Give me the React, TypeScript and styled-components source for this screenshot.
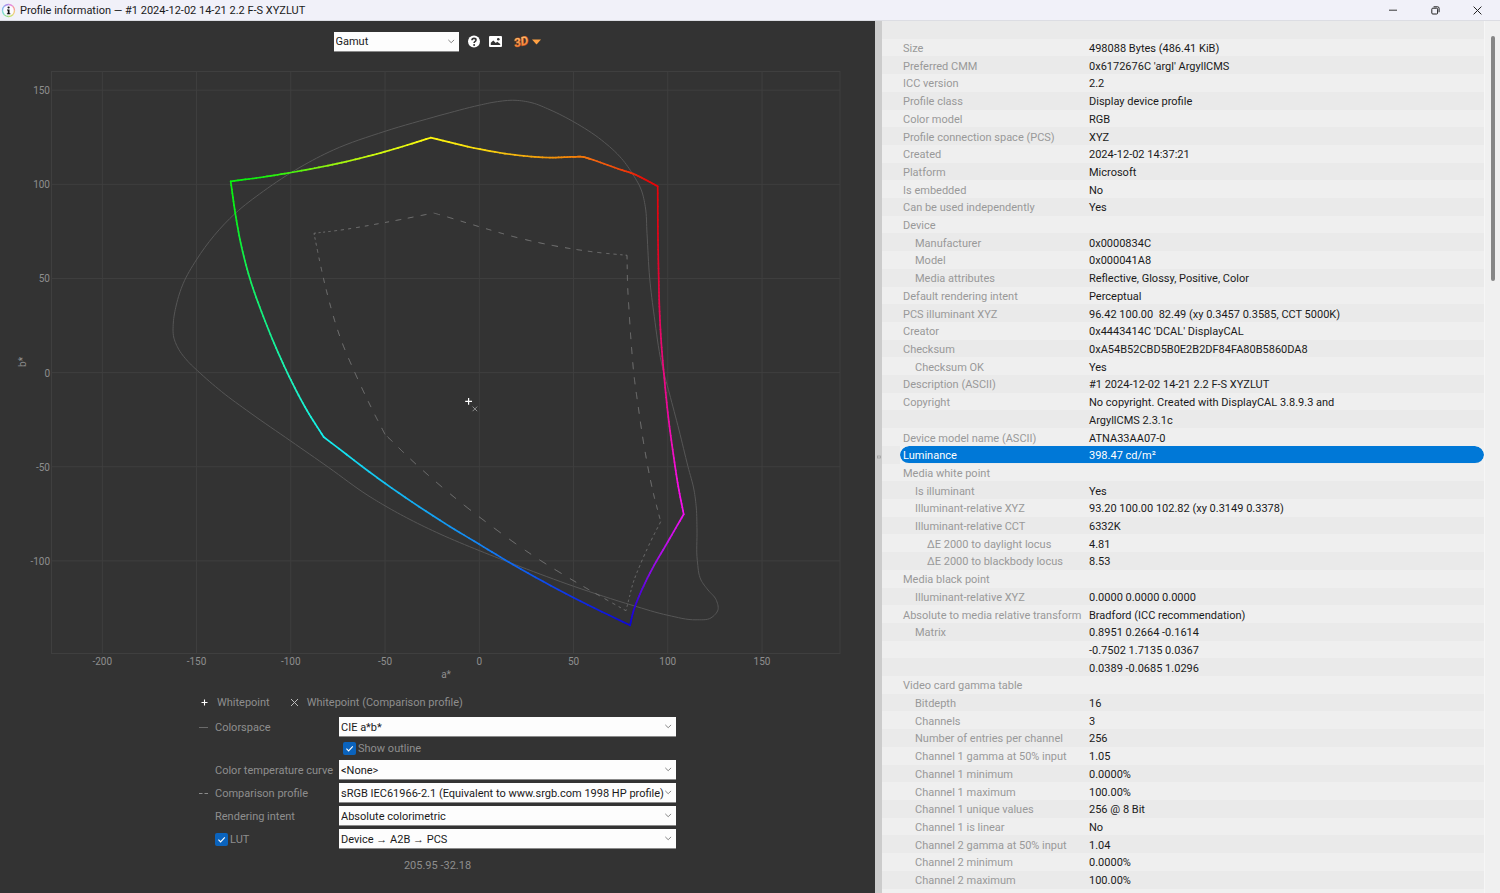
import React from "react";
import styled, { createGlobalStyle } from "styled-components";

const GlobalStyle = createGlobalStyle`
  *, *::before, *::after { box-sizing: border-box; }
  html, body { margin: 0; height: 100%; }
  body {
    font-family: Roboto, "Open Sans", sans-serif;
    font-size: 11px;
    line-height: 16px;
    background: #333333;
  }
  button, select, input { font: inherit; }
`;

/* ---------- window ---------- */

const Window = styled.div`
  display: flex;
  flex-direction: column;
  height: 100vh;
  overflow: hidden;
`;

const TitleBar = styled.header`
  display: flex;
  align-items: center;
  flex: none;
  height: 21px;
  padding: 0 2px 0 1px;
  background: #f1f1f9;
  border-bottom: 1px solid #dcdde3;
  color: #1a1a1a;
`;

const Title = styled.h1`
  flex: 1;
  margin: 0 0 0 4px;
  font-size: 11px;
  line-height: 16px;
  font-weight: 400;
  padding-top: 2px;
`;

const WindowButton = styled.button`
  display: flex;
  align-items: center;
  justify-content: center;
  width: 42px;
  height: 20px;
  padding: 0;
  border: 0;
  background: none;
  color: #222;
`;

const Body = styled.main`
  flex: 1;
  min-height: 0;
  display: grid;
  grid-template-columns: minmax(0, 875fr) 7px minmax(0, 618fr);
`;

/* ---------- graph pane ---------- */

const GraphPane = styled.section`
  display: flex;
  flex-direction: column;
  min-height: 0;
  background: #333333;
  color: #8e8e8e;
`;

const Toolbar = styled.div`
  display: flex;
  align-items: center;
  justify-content: center;
  flex: none;
  height: 39px;
  padding: 2px 1px 0 0;
`;

const IconButton = styled.button<{ $gap: number }>`
  display: flex;
  align-items: center;
  padding: 0;
  margin-left: ${(p) => p.$gap}px;
  border: 0;
  background: none;
  color: #fff;
`;

const Field = styled.div<{ $width?: string }>`
  position: relative;
  width: ${(p) => p.$width ?? "100%"};
  height: 20px;
`;

const Select = styled.select`
  display: block;
  appearance: none;
  width: 100%;
  height: 20px;
  margin: 0;
  padding: 2px 10px 0 2px;
  border: 0;
  border-bottom: 1px solid #8a8a8a;
  border-radius: 0;
  background: #fdfdfd;
  color: #1a1a1a;
`;

const Chevron = styled.svg`
  position: absolute;
  right: 4px;
  top: 7px;
  pointer-events: none;
`;

const Chart = styled.svg`
  display: block;
  flex: 1;
  width: 100%;
  min-height: 0;
`;

const Controls = styled.div`
  flex: none;
  width: 477px;
  max-width: 100%;
  margin: 0 auto;
  height: 208px;
`;

const Legend = styled.ul`
  display: flex;
  gap: 20px;
  margin: 0 0 0 1px;
  padding: 10px 0 6px;
  list-style: none;
`;

const LegendItem = styled.li`
  display: flex;
  align-items: center;
  gap: 8px;

  & > svg {
    margin-bottom: 2px;
  }
`;

const FieldRow = styled.div`
  display: grid;
  grid-template-columns: 16px 124px minmax(0, 1fr);
  align-items: center;
  height: 20px;
  margin-bottom: 3px;
  white-space: nowrap;
`;

const FieldLabel = styled.label`
  padding-top: 2px;
`;

const CheckRow = styled(FieldRow)`
  height: 17px;

  & > * {
    grid-column: 3;
    padding-left: 4px;
  }
`;

const CheckLabel = styled.label`
  display: flex;
  align-items: center;
  gap: 2px;
`;

const CheckText = styled.span`
  padding-top: 1px;
`;

const Check = styled.input`
  appearance: none;
  width: 13px;
  height: 13px;
  margin: 0;
  border-radius: 2px;
  background: #0a63bd
    url("data:image/svg+xml,%3Csvg xmlns='http://www.w3.org/2000/svg' viewBox='0 0 13 13'%3E%3Cpath d='M3.4 6.7 L5.6 8.9 L9.8 4.4' fill='none' stroke='white' stroke-width='1.1'/%3E%3C/svg%3E")
    center / 13px 13px no-repeat;
`;

const Readout = styled.output`
  display: block;
  margin-top: 9px;
  text-align: center;
`;

/* ---------- splitter and details ---------- */

const Splitter = styled.div`
  display: flex;
  align-items: center;
  justify-content: center;
  background: #cccccc;
`;

const Details = styled.section`
  display: flex;
  min-height: 0;
  overflow: hidden;
  background: #f0f0f0;
`;

const TableArea = styled.div`
  flex: 1;
  padding-bottom: 4px;
`;

const Table = styled.table`
  width: 100%;
  height: 100%;
  border-collapse: separate;
  border-spacing: 0;
  table-layout: fixed;
  line-height: 12px;
`;

const Row = styled.tr`
  height: 17px;

  &:nth-child(odd) {
    background: #eaeaea;
  }
  &:nth-child(even) {
    background: #efefef;
  }
`;

const Gutter = styled.td`
  width: 18px;
  padding: 0;
`;

const Name = styled.th<{ $level: number; $selected: boolean }>`
  width: 189px;
  padding: 4px 0 0 ${(p) => 3 + p.$level * 12}px;
  border-bottom: 1px solid transparent;
  border-radius: ${(p) => (p.$selected ? "9px 0 0 9px" : "0")};
  background: ${(p) => (p.$selected ? "#0078d7" : "none")};
  background-clip: padding-box;
  color: ${(p) => (p.$selected ? "#fff" : "#999")};
  font-weight: 400;
  text-align: left;
  white-space: nowrap;
`;

const Value = styled.td<{ $selected: boolean }>`
  padding: 4px 0 0;
  border-bottom: 1px solid transparent;
  border-radius: ${(p) => (p.$selected ? "0 9px 9px 0" : "0")};
  background: ${(p) => (p.$selected ? "#0078d7" : "none")};
  background-clip: padding-box;
  color: ${(p) => (p.$selected ? "#fff" : "#1a1a1a")};
  white-space: pre;
`;

const ScrollTrack = styled.div`
  display: flex;
  flex-direction: column;
  flex: none;
  width: 16px;
  padding: 15px 5px 0 6px;
  border-left: 1px solid #f6f6f6;
  background: #f0f0f0;

  &::after {
    content: "";
    flex: 5;
  }
`;

const ScrollThumb = styled.div`
  flex: 2;
  border-radius: 2px;
  background: #868686;
`;

/* ---------- data ---------- */

type Entry = [name: string, value: string, level?: number];

const entries: Entry[] = [
  ["", ""],
  ["Size", "498088 Bytes (486.41 KiB)"],
  ["Preferred CMM", "0x6172676C 'argl' ArgyllCMS"],
  ["ICC version", "2.2"],
  ["Profile class", "Display device profile"],
  ["Color model", "RGB"],
  ["Profile connection space (PCS)", "XYZ"],
  ["Created", "2024-12-02 14:37:21"],
  ["Platform", "Microsoft"],
  ["Is embedded", "No"],
  ["Can be used independently", "Yes"],
  ["Device", ""],
  ["Manufacturer", "0x0000834C", 1],
  ["Model", "0x000041A8", 1],
  ["Media attributes", "Reflective, Glossy, Positive, Color", 1],
  ["Default rendering intent", "Perceptual"],
  ["PCS illuminant XYZ", "96.42 100.00  82.49 (xy 0.3457 0.3585, CCT 5000K)"],
  ["Creator", "0x4443414C 'DCAL' DisplayCAL"],
  ["Checksum", "0xA54B52CBD5B0E2B2DF84FA80B5860DA8"],
  ["Checksum OK", "Yes", 1],
  ["Description (ASCII)", "#1 2024-12-02 14-21 2.2 F-S XYZLUT"],
  ["Copyright", "No copyright. Created with DisplayCAL 3.8.9.3 and"],
  ["", "ArgyllCMS 2.3.1c"],
  ["Device model name (ASCII)", "ATNA33AA07-0"],
  ["Luminance", "398.47 cd/m²"],
  ["Media white point", ""],
  ["Is illuminant", "Yes", 1],
  ["Illuminant-relative XYZ", "93.20 100.00 102.82 (xy 0.3149 0.3378)", 1],
  ["Illuminant-relative CCT", "6332K", 1],
  ["ΔE 2000 to daylight locus", "4.81", 2],
  ["ΔE 2000 to blackbody locus", "8.53", 2],
  ["Media black point", ""],
  ["Illuminant-relative XYZ", "0.0000 0.0000 0.0000", 1],
  ["Absolute to media relative transform", "Bradford (ICC recommendation)"],
  ["Matrix", "0.8951 0.2664 -0.1614", 1],
  ["", "-0.7502 1.7135 0.0367"],
  ["", "0.0389 -0.0685 1.0296"],
  ["Video card gamma table", ""],
  ["Bitdepth", "16", 1],
  ["Channels", "3", 1],
  ["Number of entries per channel", "256", 1],
  ["Channel 1 gamma at 50% input", "1.05", 1],
  ["Channel 1 minimum", "0.0000%", 1],
  ["Channel 1 maximum", "100.00%", 1],
  ["Channel 1 unique values", "256 @ 8 Bit", 1],
  ["Channel 1 is linear", "No", 1],
  ["Channel 2 gamma at 50% input", "1.04", 1],
  ["Channel 2 minimum", "0.0000%", 1],
  ["Channel 2 maximum", "100.00%", 1],
];

/* Each edge of the gamut: x, y, then the colour at that point. */
type Stop = [x: number, y: number, r: number, g: number, b: number];

const gamutEdges: Stop[][] = [
  [
    [230.7, 181.3, 10, 240, 15], [260, 177.5, 20, 240, 15], [288.3, 173, 60, 242, 15],
    [323.3, 166.5, 130, 245, 15], [360, 158.3, 185, 248, 15], [393.3, 149.3, 220, 250, 15],
    [430.7, 137.7, 255, 250, 15],
  ],
  [
    [430.7, 137.7, 255, 250, 15], [480, 149.2, 250, 220, 15], [520, 155.5, 245, 180, 15],
    [550, 157.6, 242, 150, 10], [573, 156.9, 242, 130, 10], [583, 156.9, 242, 120, 10],
    [590, 158.9, 242, 110, 15], [618, 168.8, 240, 75, 10], [635, 174.5, 235, 40, 10],
    [645, 179.5, 230, 15, 10], [657.7, 186.3, 230, 5, 10],
  ],
  [
    [657.7, 186.3, 230, 5, 10], [658, 240, 225, 5, 25], [658.7, 278, 225, 5, 50],
    [659.4, 306.7, 228, 5, 75], [661.3, 343, 230, 10, 110], [664.3, 378, 235, 10, 130],
    [668.3, 417, 238, 10, 160], [673.3, 454, 240, 15, 195], [678.3, 486.7, 245, 15, 225],
    [683.7, 514.3, 245, 15, 240],
  ],
  [
    [683.7, 514.3, 245, 15, 240], [667.7, 542, 200, 15, 235], [650, 573, 140, 10, 230],
    [640, 594, 85, 5, 220], [633.5, 611, 40, 5, 215], [630, 625.3, 15, 5, 210],
  ],
  [
    [630, 625.3, 15, 5, 210], [573.7, 597.7, 15, 45, 230], [513.3, 564.7, 15, 100, 240],
    [479.3, 544.3, 20, 130, 243], [440, 520.3, 20, 155, 243], [385, 483.3, 20, 190, 243],
    [323.7, 437, 20, 240, 240],
  ],
  [
    [323.7, 437, 20, 240, 240], [307, 410.5, 25, 242, 215], [290.7, 379.7, 30, 242, 190],
    [278, 352.3, 25, 242, 165], [263.3, 316.5, 20, 240, 130], [249.7, 278, 20, 240, 95],
    [240.7, 243, 15, 240, 60], [235.3, 213.3, 10, 240, 30], [230.7, 181.3, 10, 240, 15],
  ],
];

/* Comparison gamut: x, y and the dash period at that point. */
const comparisonEdges: number[][][] = [
  [[314, 233.3, 4], [341.7, 229.9, 7], [385, 222.5, 11], [433.7, 213, 14]],
  [[433.7, 213, 14], [440, 214.8, 14], [480, 226.9, 13], [520, 238.3, 14], [573, 249, 12], [600, 252.7, 9], [627, 255.3, 5]],
  [
    [627, 255.3, 8], [627.8, 290, 14], [629, 310, 15], [631.2, 343, 15], [634.3, 378, 15], [638, 405, 15],
    [644.5, 448.3, 15], [653, 491.7, 13], [660.7, 521.7, 8],
  ],
  [[660.7, 521.7, 6], [651.7, 539.3, 6], [641.5, 561.7, 6], [633, 583.3, 5], [628.7, 600, 5], [626, 610.7, 5]],
  [
    [626, 610.7, 5], [607, 600, 9], [578.3, 583.5, 16], [536.7, 558, 18], [490, 525, 19], [446.7, 491, 18],
    [413.3, 461.7, 17], [385, 434.3, 15],
  ],
  [
    [385, 434.3, 15], [373.3, 411.7, 15], [356.7, 376.7, 16], [340.5, 338.3, 15], [326.7, 291.7, 13],
    [318.8, 257, 9], [314, 233.3, 4],
  ],
];

const spectralLocus: number[][] = [
  [440, 115.3], [385, 131.3], [333.3, 150], [300, 167.3], [263.3, 191.3], [235.3, 213.3], [196.3, 260],
  [183.3, 283.3], [176.3, 305], [173.3, 323], [173.7, 337], [178, 348], [188, 361.5], [197.3, 370.5],
  [221.7, 391.7], [250, 412.7], [290.7, 441], [328.7, 467.5], [368, 495.5], [385, 505.8], [410, 519.5],
  [440, 534], [479.3, 550.6], [520, 566.5], [573.7, 586.3], [633, 605.5], [668, 615.3], [696, 619.8],
  [711, 617.9], [718, 609.7], [716, 599.5], [708, 590], [701, 580], [697.3, 560.5], [697, 530],
  [696.3, 508], [694, 490], [688, 466.7], [679, 430], [669.3, 393], [661.5, 363], [654.3, 316.7],
  [649.7, 278.3], [647, 233.3], [645.3, 206.7], [641.3, 190], [633, 174.5], [621.7, 158.7],
  [601.7, 140.2], [574, 122], [550, 109.8], [532, 102.8], [515, 100.3], [495, 102], [479.3, 105.2],
  [440, 115.3],
];

/* Non-uniform Catmull-Rom: every component of the points is sampled alike. */
function smooth(points: number[][], steps: number): number[][] {
  const out: number[][] = [];
  for (let i = 0; i < points.length - 1; i++) {
    const b = points[i];
    const c = points[i + 1];
    const a = points[i - 1] ?? b.map((v, k) => 2 * v - c[k]);
    const d = points[i + 2] ?? c.map((v, k) => 2 * v - b[k]);
    const dist = (p: number[], q: number[]) => Math.max(0.01, Math.hypot(p[0] - q[0], p[1] - q[1]));
    const d1 = dist(a, b);
    const d2 = dist(b, c);
    const d3 = dist(c, d);
    for (let s = 0; s < steps; s++) {
      const t = s / steps;
      out.push(
        b.map((_, k) => {
          const m1 = d2 * ((b[k] - a[k]) / d1 - (c[k] - a[k]) / (d1 + d2) + (c[k] - b[k]) / d2);
          const m2 = d2 * ((c[k] - b[k]) / d2 - (d[k] - b[k]) / (d2 + d3) + (d[k] - c[k]) / d3);
          const t2 = t * t;
          const t3 = t2 * t;
          return (
            (2 * t3 - 3 * t2 + 1) * b[k] + (t3 - 2 * t2 + t) * m1 + (3 * t2 - 2 * t3) * c[k] + (t3 - t2) * m2
          );
        }),
      );
    }
  }
  out.push(points[points.length - 1]);
  return out;
}

const toPath = (pts: number[][]) => "M" + pts.map((p) => `${p[0].toFixed(2)} ${p[1].toFixed(2)}`).join("L");

function dashes(edge: number[][]): string {
  const pts = smooth(edge, 60);
  let phase = 0;
  let run: number[][] = [];
  let path = "";
  pts.forEach((p, i) => {
    if (i > 0) phase += Math.hypot(p[0] - pts[i - 1][0], p[1] - pts[i - 1][1]) / p[2];
    if (phase % 1 < 0.5) {
      run.push(p);
    } else if (run.length) {
      path += toPath(run);
      run = [];
    }
  });
  return run.length > 1 ? path + toPath(run) : path;
}

const xTicks = [-200, -150, -100, -50, 0, 50, 100, 150];
const yTicks = [150, 100, 50, 0, -50, -100];
const xAt = (a: number) => 479.3 + a * 1.885;
const yAt = (b: number) => 372.6 - b * 1.883;

function GamutChart() {
  return (
    <Chart viewBox="0 60 875 625" role="img" aria-label="Gamut, CIE a*b*">
      <g stroke="#3f3f3f" strokeWidth="1" fill="none">
        <rect x="51.5" y="71.5" width="788.5" height="582" />
        {xTicks.map((t) => <path key={t} d={`M${xAt(t)} 71.5V653.5`} />)}
        {yTicks.map((t) => <path key={t} d={`M51.5 ${yAt(t)}H840`} />)}
      </g>
      <g fill="#8e8e8e" fontSize="10">
        {xTicks.map((t) => (
          <text key={t} x={xAt(t)} y="665" textAnchor="middle">{t}</text>
        ))}
        {yTicks.map((t) => (
          <text key={t} x="50" y={yAt(t) + 4} textAnchor="end">{t}</text>
        ))}
        <text x="446" y="678" textAnchor="middle">a*</text>
        <text transform="translate(26 362) rotate(-90)" textAnchor="middle">b*</text>
      </g>
      <path d={toPath(smooth(spectralLocus, 8))} fill="none" stroke="#565656" strokeWidth="1" />
      {comparisonEdges.map((edge, i) => (
        <path key={i} d={dashes(edge)} fill="none" stroke="#7a7a7a" strokeWidth="1" />
      ))}
      {gamutEdges.map((edge, i) => {
        const pts = smooth(edge, 8);
        return (
          <g key={i} fill="none" strokeWidth="1.7" strokeLinecap="round">
            {pts.slice(1).map((p, j) => (
              <path
                key={j}
                d={toPath([pts[j], p])}
                stroke={`rgb(${p.slice(2).map((v) => Math.max(0, Math.min(255, Math.round(v)))).join(",")})`}
              />
            ))}
          </g>
        );
      })}
      <path d="M465.2 401.3H472M468.6 397.9V404.7" stroke="#fff" strokeWidth="1.2" />
      <path d="M472.6 406.6L477.2 411.2M477.2 406.6L472.6 411.2" stroke="#999" strokeWidth="0.9" />
    </Chart>
  );
}

function Dropdown({ id, value, width, label }: { id: string; value: string; width?: string; label?: string }) {
  return (
    <Field $width={width}>
      <Select id={id} aria-label={label} defaultValue={value}>
        <option>{value}</option>
      </Select>
      <Chevron width="8" height="5" viewBox="0 0 8 5" aria-hidden="true">
        <path d="M1.3 0.9 L4.2 3.7 L7.1 0.9" fill="none" stroke="#777" strokeWidth="0.9" />
      </Chevron>
    </Field>
  );
}

function AppIcon() {
  const hues = ["#e58bd8", "#f39a9a", "#f0c878", "#c9e070", "#8fdc8f", "#7fdccc", "#86b8ee", "#a993ea"];
  return (
    <svg width="15" height="15" viewBox="0 0 15 15" aria-hidden="true">
      <circle cx="7.5" cy="7.5" r="6.4" fill="#fbfbff" />
      {hues.map((h, i) => (
        <circle
          key={h} cx="7.5" cy="7.5" r="6" fill="none" stroke={h} strokeWidth="1.3"
          strokeDasharray="4.8 32.9" transform={`rotate(${i * 45 - 90} 7.5 7.5)`}
        />
      ))}
      <circle cx="7.6" cy="4.5" r="1.1" fill="#111" />
      <path d="M6 6.5H8.5V10.2H9.3V11.2H5.9V10.2H6.8V7.4H6Z" fill="#111" />
    </svg>
  );
}

export default function App() {
  return (
    <>
      <GlobalStyle />
      <Window>
        <TitleBar>
          <AppIcon />
          <Title>Profile information — #1 2024-12-02 14-21 2.2 F-S XYZLUT</Title>
          <WindowButton aria-label="Minimize">
            <svg width="8" height="8" viewBox="0 0 8 8"><path d="M0 4.2H8" stroke="currentColor" strokeWidth="0.9" /></svg>
          </WindowButton>
          <WindowButton aria-label="Restore">
            <svg width="9" height="9" viewBox="0 0 9 9" fill="none" stroke="currentColor">
              <rect x="0.8" y="2.2" width="5.8" height="5.8" rx="1" />
              <path d="M2.6 0.8H6.6Q8.1 0.8 8.1 2.3V6.2" />
            </svg>
          </WindowButton>
          <WindowButton aria-label="Close">
            <svg width="9" height="9" viewBox="0 0 9 9"><path d="M0.6 0.6L8.4 8.4M8.4 0.6L0.6 8.4" stroke="currentColor" /></svg>
          </WindowButton>
        </TitleBar>
        <Body>
          <GraphPane>
            <Toolbar>
              <Dropdown id="view" label="View" value="Gamut" width="125px" />
              <IconButton $gap={9} aria-label="Help">
                <svg width="12" height="13" viewBox="0 0 12 13">
                  <circle cx="6" cy="6.5" r="6" fill="#fff" />
                  <path d="M4 5.2Q4 3.4 6 3.4Q8 3.4 8 5Q8 6 6.9 6.6Q6.1 7.1 6.1 8" fill="none" stroke="#333" strokeWidth="1.6" />
                  <circle cx="6.1" cy="10" r="1" fill="#333" />
                </svg>
              </IconButton>
              <IconButton $gap={9} aria-label="Save image">
                <svg width="13" height="11" viewBox="0 0 13 11">
                  <rect width="13" height="11" rx="1" fill="#fff" />
                  <path d="M1.8 9V6.8L4.3 4.6L6.8 7L8.2 5.8L11.2 8V9Z" fill="#333" />
                  <circle cx="9.3" cy="3.2" r="1.3" fill="#333" />
                </svg>
              </IconButton>
              <IconButton $gap={11} aria-label="View 3D">
                <svg width="28" height="22" viewBox="0 0 28 22">
                  <defs>
                    <linearGradient id="amber" x1="0" y1="0" x2="0" y2="1">
                      <stop offset="0.2" stopColor="#ffb566" />
                      <stop offset="0.8" stopColor="#f58238" />
                    </linearGradient>
                  </defs>
                  <g fontSize="12" fontWeight="700" fontStyle="italic" transform="rotate(-12 7 11)">
                    <text x="1" y="15" fill="url(#amber)" stroke="#9c481c" strokeWidth="1" paintOrder="stroke">3D</text>
                  </g>
                  <path d="M19 8.4H28L23.5 13.4Z" fill="#ffa143" />
                </svg>
              </IconButton>
            </Toolbar>
            <GamutChart />
            <Controls>
              <Legend>
                <LegendItem>
                  <svg width="9" height="9" viewBox="0 0 9 9"><path d="M1.5 4.5H7.5M4.5 1.5V7.5" stroke="#fff" strokeWidth="1.1" /></svg>
                  Whitepoint
                </LegendItem>
                <LegendItem>
                  <svg width="9" height="9" viewBox="0 0 9 9"><path d="M1 1L8 8M8 1L1 8" stroke="#bbb" strokeWidth="1" /></svg>
                  Whitepoint (Comparison profile)
                </LegendItem>
              </Legend>
              <FieldRow>
                <svg width="9" height="3" viewBox="0 0 9 3"><path d="M0 1.5H9" stroke="#6a6a6a" /></svg>
                <FieldLabel htmlFor="space">Colorspace</FieldLabel>
                <Dropdown id="space" value="CIE a*b*" />
              </FieldRow>
              <CheckRow>
                <CheckLabel><Check type="checkbox" defaultChecked /><CheckText>Show outline</CheckText></CheckLabel>
              </CheckRow>
              <FieldRow>
                <span />
                <FieldLabel htmlFor="curve">Color temperature curve</FieldLabel>
                <Dropdown id="curve" value="<None>" />
              </FieldRow>
              <FieldRow>
                <svg width="9" height="3" viewBox="0 0 9 3"><path d="M0 1.5H3.5M5.5 1.5H9" stroke="#8a8a8a" /></svg>
                <FieldLabel htmlFor="comparison">Comparison profile</FieldLabel>
                <Dropdown id="comparison" value="sRGB IEC61966-2.1 (Equivalent to www.srgb.com 1998 HP profile)" />
              </FieldRow>
              <FieldRow>
                <span />
                <FieldLabel htmlFor="intent">Rendering intent</FieldLabel>
                <Dropdown id="intent" value="Absolute colorimetric" />
              </FieldRow>
              <FieldRow>
                <span />
                <CheckLabel><Check type="checkbox" defaultChecked /><CheckText>LUT</CheckText></CheckLabel>
                <Dropdown id="direction" label="Direction" value="Device → A2B → PCS" />
              </FieldRow>
              <Readout>205.95 -32.18</Readout>
            </Controls>
          </GraphPane>
          <Splitter role="separator" aria-orientation="vertical">
            <svg width="4" height="4" viewBox="0 0 4 4" aria-hidden="true"><rect x="0.5" y="1" width="3" height="2" fill="none" stroke="#999" strokeWidth="0.7" /></svg>
          </Splitter>
          <Details>
            <TableArea>
              <Table>
                <tbody>
                  {entries.map(([name, value, level = 0], i) => {
                    const selected = name === "Luminance";
                    return (
                      <Row key={i}>
                        <Gutter />
                        <Name scope="row" $level={level} $selected={selected}>{name}</Name>
                        <Value $selected={selected}>{value}</Value>
                      </Row>
                    );
                  })}
                </tbody>
              </Table>
            </TableArea>
            <ScrollTrack>
              <ScrollThumb role="scrollbar" aria-orientation="vertical" aria-valuenow={0} />
            </ScrollTrack>
          </Details>
        </Body>
      </Window>
    </>
  );
}
